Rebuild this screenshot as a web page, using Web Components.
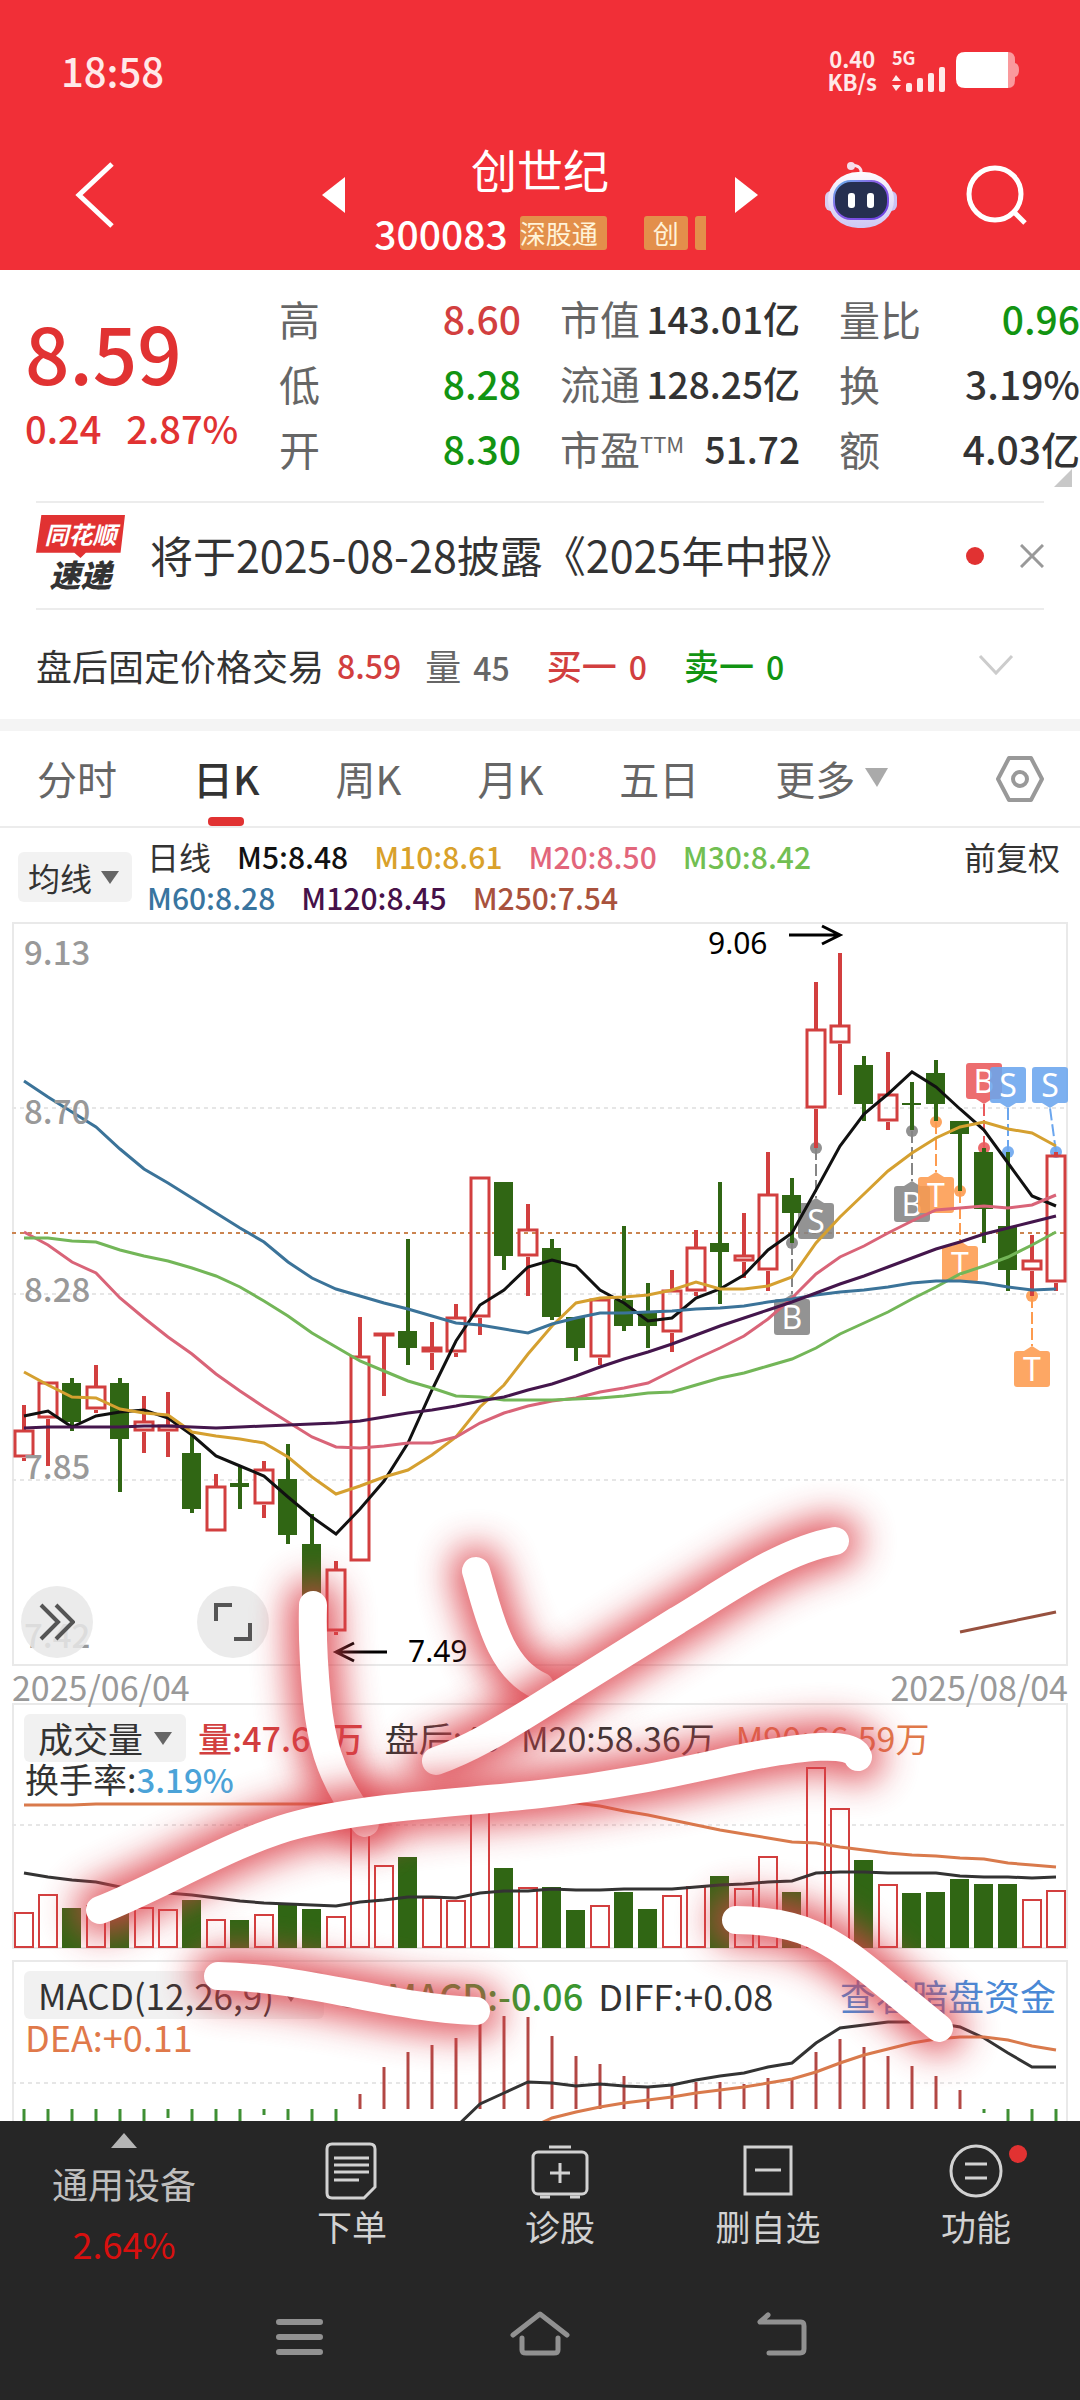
<!DOCTYPE html>
<html lang="zh-CN">
<head>
<meta charset="utf-8">
<meta name="viewport" content="width=device-width, initial-scale=1">
<title>创世纪 300083</title>
<style>
  * { box-sizing: border-box; }
  html { background: #262626; }
  body {
    margin: 0;
    min-height: 100vh;
    display: flex;
    flex-direction: column;
    font-family: "Noto Sans CJK SC", "Noto Sans", sans-serif;
    color: #333;
    --red: #e13232;
    --green: #129412;
    --rise: #d23f3f;
    --fall: #306614;
    --muted: #666;
    --line: #ececec;
  }
</style>
</head>
<body>
<status-bar></status-bar>
<stock-header name="创世纪" code="300083"></stock-header>
<quote-board></quote-board>
<news-strip>将于2025-08-28披露《2025年中报》</news-strip>
<after-hours></after-hours>
<period-tabs></period-tabs>
<ma-legend></ma-legend>
<chart-stack>
  <candle-chart></candle-chart>
  <volume-chart></volume-chart>
  <macd-chart></macd-chart>
</chart-stack>
<action-bar>
  <index-ticker slot="index" name="通用设备" change="2.64%"></index-ticker>
  <action-item label="下单">
    <svg width="60" height="60" viewBox="0 0 60 60" fill="none" stroke="#d2d2d2" stroke-width="3"><path d="M10 3h38q5 0 5 5v38l-11 11H10q-5 0-5-5V8q0-5 5-5z"/><path d="M12 17h35M12 24h35M12 31h35M12 39h25"/></svg>
  </action-item>
  <action-item label="诊股">
    <svg width="60" height="60" viewBox="0 0 60 60" fill="none" stroke="#d2d2d2" stroke-width="3"><rect x="3" y="11" width="54" height="42" rx="5"/><path d="M19 6h22M30 22v20M20 32h20M10 56h10M40 56h10"/></svg>
  </action-item>
  <action-item label="删自选">
    <svg width="60" height="60" viewBox="0 0 60 60" fill="none" stroke="#d2d2d2" stroke-width="3"><path d="M7 6h46v47H7zM17 29h26"/></svg>
  </action-item>
  <action-item label="功能" dot>
    <svg width="60" height="60" viewBox="0 0 60 60" fill="none" stroke="#d2d2d2" stroke-width="3"><circle cx="30" cy="30" r="25"/><path d="M19 23h22M19 37h22"/></svg>
  </action-item>
</action-bar>
<system-nav></system-nav>

<script>
const BASE = `
  <style>
    *, *::before, *::after { box-sizing: border-box; }
    button { font: inherit; color: inherit; background: none; border: 0; padding: 0; margin: 0; cursor: pointer; }
    a { color: inherit; text-decoration: none; }
    svg { display: block; flex: none; }
  </style>`;

const define = (name, render) =>
  customElements.define(
    name,
    class extends HTMLElement {
      connectedCallback() {
        if (this.shadowRoot) return;
        this.attachShadow({ mode: "open" }).innerHTML = BASE + render(this);
      }
    }
  );

define("status-bar", () => /*html*/ `
  <style>
    :host { display: flex; align-items: center; justify-content: space-between; height: 130px; padding: 10px 60px 0 61px; background: #f12f37; color: #ffe9e9; }
    time { font-size: 40px; line-height: 40px; font-weight: 500; }
    .right { display: flex; align-items: center; gap: 10px; }
    .speed { font-size: 22px; line-height: 23px; font-weight: 700; text-align: center; }
    .cell { font-size: 18px; line-height: 18px; font-weight: 700; padding-left: 5px; }
  </style>
  <time>18:58</time>
  <div class="right">
    <div class="speed">0.40<br>KB/s</div>
    <div class="cell">5G
      <svg width="54" height="26" viewBox="0 0 54 26" fill="currentColor"><path d="M0 15l4-6 5 6zM0 19h9l-5 6z"/><rect x="14" y="17" width="6" height="9" rx="2"/><rect x="25" y="12" width="6" height="14" rx="2"/><rect x="36" y="7" width="6" height="19" rx="2"/><rect x="47" y="1" width="6" height="25" rx="2"/></svg>
    </div>
    <svg width="64" height="36" viewBox="0 0 64 36"><path d="M50 0h2q7 0 7 8v3q4 1 4 7t-4 7v3q0 8-7 8h-2z" fill="#fa999c"/><path d="M9 0h43v36H9q-9 0-9-9V9q0-9 9-9z" fill="#fff"/></svg>
  </div>
`);

define("stock-header", (el) => /*html*/ `
  <style>
    :host { display: grid; grid-template-columns: 1fr auto 1fr; align-items: center; height: 140px; padding-bottom: 10px; background: #f12f37; color: #fff; }
    .back { justify-self: start; margin-left: 75px; }
    .middle { display: flex; align-items: center; gap: 31px; }
    .title { width: 328px; display: flex; flex-direction: column; align-items: center; }
    h1 { margin: 0; font-size: 46px; line-height: 76px; font-weight: 400; }
    .sub { display: flex; align-items: center; gap: 12px; font-size: 39px; line-height: 54px; font-weight: 500; }
    .tags { display: flex; width: 186px; overflow: hidden; font-size: 26px; line-height: 34px; font-weight: 400; color: #fff3d8; white-space: nowrap; }
    .tags span { flex: none; background: #e38f4b; border-radius: 3px; padding: 0 9px; }
    .tags span:first-child { padding-left: 0; margin-right: 37px; }
    .tags span:last-child { margin-left: 7px; }
    .tools { justify-self: end; display: flex; align-items: center; gap: 66px; margin-right: 52px; }
  </style>
  <button class="back" aria-label="返回"><svg width="40" height="68" viewBox="0 0 40 68" fill="none" stroke="#fff" stroke-width="5"><path d="M37 3L4 34l33 31"/></svg></button>
  <div class="middle">
    <button aria-label="上一只"><svg width="23" height="36" viewBox="0 0 23 36" fill="#fff"><path d="M23 0v36L0 18z"/></svg></button>
    <div class="title">
      <h1>${el.getAttribute("name")}</h1>
      <div class="sub">${el.getAttribute("code")}<div class="tags"><span>深股通</span><span>创</span><span></span></div></div>
    </div>
    <button aria-label="下一只"><svg width="23" height="36" viewBox="0 0 23 36" fill="#fff"><path d="M0 0v36l23-18z"/></svg></button>
  </div>
  <div class="tools">
    <button aria-label="智能助手">
      <svg width="74" height="70" viewBox="0 0 74 70">
        <defs>
          <linearGradient id="h" x1="0" y1="0" x2="0" y2="1"><stop offset="0" stop-color="#fffafd"/><stop offset="1" stop-color="#cdc8f4"/></linearGradient>
          <linearGradient id="f" x1="0" y1="0" x2="1" y2="1"><stop offset="0" stop-color="#63b8ea"/><stop offset=".4" stop-color="#8a5fe6"/><stop offset="1" stop-color="#6a3fe0"/></linearGradient>
        </defs>
        <path d="M37 13q1-7-9-8" fill="none" stroke="#fbe3ee" stroke-width="3"/><circle cx="27" cy="6" r="4" fill="#f6dcea"/>
        <rect x="1" y="31" width="12" height="20" rx="6" fill="#d9cdf0"/><rect x="61" y="31" width="12" height="20" rx="6" fill="#c9c2f2"/>
        <rect x="4" y="12" width="66" height="56" rx="30" fill="url(#h)"/>
        <rect x="10" y="21" width="54" height="38" rx="17" fill="#262f50" stroke="url(#f)" stroke-width="2"/>
        <rect x="24" y="33" width="7" height="15" rx="3" fill="#fff"/><rect x="43" y="33" width="7" height="15" rx="3" fill="#fff"/>
      </svg>
    </button>
    <button aria-label="搜索"><svg width="64" height="64" viewBox="0 0 64 64" fill="none" stroke="#fff" stroke-width="5"><circle cx="31" cy="31" r="26"/><path d="M50 49l11 11"/></svg></button>
  </div>
`);

define("quote-board", () => /*html*/ `
  <style>
    :host { display: grid; grid-template-columns: 240px 242px 240px 1fr; column-gap: 39px; padding: 16px 0 20px; background: #fff; position: relative; }
    .price { padding-left: 25px; color: var(--red); font-weight: 500; white-space: nowrap; }
    .price strong { display: block; font-size: 78px; line-height: 96px; margin-top: 17px; font-weight: 500; }
    .price div { display: flex; gap: 25px; font-size: 38px; line-height: 50px; margin-top: 4px; }
    dl { margin: 0; font-size: 41px; line-height: 65px; }
    dl div { display: flex; justify-content: space-between; height: 65px; white-space: nowrap; }
    dt { color: var(--muted); }
    dd { margin: 0; font-size: 39px; font-weight: 500; color: #333; }
    .mid dt { font-size: 40px; }
    .mid dd { font-size: 37px; }
    sup { font-size: 22px; line-height: 22px; vertical-align: 12px; }
    .up { color: var(--rise); }
    .down { color: var(--green); }
    .corner { position: absolute; right: 8px; bottom: 14px; }
  </style>
  <div class="price"><strong>8.59</strong><div><span>0.24</span><span>2.87%</span></div></div>
  <dl>
    <div><dt>高</dt><dd class="up">8.60</dd></div>
    <div><dt>低</dt><dd class="down">8.28</dd></div>
    <div><dt>开</dt><dd class="down">8.30</dd></div>
  </dl>
  <dl class="mid">
    <div><dt>市值</dt><dd>143.01亿</dd></div>
    <div><dt>流通</dt><dd>128.25亿</dd></div>
    <div><dt>市盈<sup>TTM</sup></dt><dd>51.72</dd></div>
  </dl>
  <dl>
    <div><dt>量比</dt><dd class="down">0.96</dd></div>
    <div><dt>换</dt><dd>3.19%</dd></div>
    <div><dt>额</dt><dd>4.03亿</dd></div>
  </dl>
  <svg class="corner" width="18" height="18" viewBox="0 0 18 18" fill="#c8c8c8"><path d="M18 0v18H0z"/></svg>
`);

define("news-strip", () => /*html*/ `
  <style>
    :host { display: block; padding: 0 36px; background: #fff; }
    .row { display: flex; align-items: center; height: 109px; border-top: 2px solid var(--line); border-bottom: 2px solid var(--line); }
    .logo { width: 89px; margin-right: 25px; text-align: center; font-weight: 900; font-style: italic; line-height: 32px; }
    .logo b { display: block; height: 43px; background: var(--red); color: #fff; font-size: 24px; line-height: 37px; font-weight: 700; clip-path: polygon(6% 0, 100% 0, 95% 88%, 56% 88%, 50% 100%, 43% 88%, 0 88%); }
    .logo span { font-size: 31px; }
    a { flex: 1; font-size: 43px; line-height: 60px; padding-bottom: 4px; white-space: nowrap; color: #333; }
    .dot { width: 18px; height: 18px; border-radius: 50%; background: var(--red); margin-right: 36px; }
  </style>
  <div class="row">
    <div class="logo"><b>同花顺</b><span>速递</span></div>
    <a href="#"><slot></slot></a>
    <i class="dot"></i>
    <button aria-label="关闭"><svg width="24" height="24" viewBox="0 0 24 24" stroke="#999" stroke-width="3"><path d="M1 1l22 22M23 1L1 23"/></svg></button>
  </div>
`);

define("after-hours", () => /*html*/ `
  <style>
    :host { display: flex; align-items: center; height: 109px; padding: 0 66px 0 36px; background: #fff; font-size: 36px; white-space: nowrap; }
    b { font-size: 32px; font-weight: 500; }
    .p { margin-left: 13px; }
    .n { margin-left: 12px; }
    .g { margin-left: 24px; color: var(--muted); }
    .up { color: var(--rise); }
    .down { color: var(--green); }
    .s { margin-left: 37px; font-size: 35px; font-weight: 500; }
    button { margin-left: auto; }
  </style>
  <span>盘后固定价格交易</span><b class="p up">8.59</b>
  <span class="g">量<b class="n">45</b></span>
  <span class="s up">买一<b class="n">0</b></span>
  <span class="s down">卖一<b class="n">0</b></span>
  <button aria-label="展开"><svg width="36" height="22" viewBox="0 0 36 22" fill="none" stroke="#ccc" stroke-width="3"><path d="M2 2l16 17L34 2"/></svg></button>
`);

define("period-tabs", () => /*html*/ `
  <style>
    :host { display: flex; align-items: center; height: 109px; padding: 0 36px 0 37px; border-top: 12px solid #f4f4f4; border-bottom: 2px solid var(--line); background: #fff; font-size: 40px; color: var(--muted); }
    nav { display: flex; align-self: stretch; gap: 76px; flex: 1; }
    nav button { display: flex; align-items: center; gap: 10px; white-space: nowrap; padding-bottom: 2px; }
    nav .on { position: relative; color: #333; font-weight: 500; }
    nav .on::after { content: ""; position: absolute; left: 50%; bottom: 0; width: 36px; height: 9px; margin-left: -18px; border-radius: 4px; background: var(--red); }
  </style>
  <nav>
    <button>分时</button><button class="on">日K</button><button>周K</button><button>月K</button><button>五日</button>
    <button>更多<svg width="23" height="19" viewBox="0 0 23 19" fill="#aaa"><path d="M0 0h23L12 19z"/></svg></button>
  </nav>
  <button aria-label="设置"><svg width="48" height="46" viewBox="0 0 48 46" fill="none" stroke="#999" stroke-width="4"><path d="M13 2h22l11 21-11 21H13L2 23z" stroke-linejoin="round"/><circle cx="24" cy="23" r="7"/></svg></button>
`);

define("ma-legend", () => /*html*/ `
  <style>
    :host { display: flex; align-items: center; padding: 8px 20px 4px 18px; background: #fff; font-size: 32px; color: #333; }
    .pick { display: flex; align-items: center; gap: 9px; width: 114px; height: 50px; padding-left: 10px; border-radius: 6px; background: #f2f2f2; margin-right: 15px; white-space: nowrap; }
    .list { flex: 1; display: flex; flex-wrap: wrap; column-gap: 26px; padding-right: 60px; line-height: 41px; font-weight: 500; font-size: 30px; }
    .list span:first-child { font-size: 32px; font-weight: 400; }
    .adj { align-self: flex-start; line-height: 41px; }
  </style>
  <button class="pick">均线<svg width="18" height="13" viewBox="0 0 18 13" fill="#666"><path d="M0 0h18L9 13z"/></svg></button>
  <div class="list">
    <span>日线</span><span style="color:#111">M5:8.48</span><span style="color:#d9a12b">M10:8.61</span><span style="color:#e2667b">M20:8.50</span><span style="color:#72bf52">M30:8.42</span>
    <span style="color:#39759f">M60:8.28</span><span style="color:#461149">M120:8.45</span><span style="color:#a9523d">M250:7.54</span>
  </div>
  <button class="adj">前复权</button>
`);

/* ---------- charts: all three share one x axis, 44 days, 24 units apart ---------- */
const X0 = 24;
const STEP = 24;
const RISE = "#d23f3f";
const FALL = "#306614";
const cx = (i) => X0 + i * STEP;

// start: index of the first value
const line = (color, ys, start = 0) =>
  `<polyline fill="none" stroke="${color}" stroke-width="3" points="${ys.map((y, i) => `${cx(i + start)},${y}`).join(" ")}"/>`;

const dashes = (y, color = "#e6e6e6") =>
  `<path d="M12 ${y}H1067" stroke="${color}" stroke-width="2" stroke-dasharray="4 4"/>`;

/* [rise, high, top, bottom, low] */
const CANDLES = [
  [1,1405,1430,1458,1461],[1,1382,1382,1419,1466],[0,1378,1383,1422,1431],[1,1365,1386,1410,1413],[0,1378,1383,1439,1492],
  [1,1396,1421,1432,1453],[1,1392,1425,1432,1457],[0,1435,1453,1509,1513],[1,1474,1486,1532,1532],[0,1466,1483,1487,1509],
  [1,1461,1469,1505,1518],[0,1444,1479,1535,1544],[0,1514,1544,1615,1620],[1,1561,1569,1632,1635],[1,1317,1356,1562,1562],
  [1,1333,1333,1336,1396],[0,1239,1331,1348,1365],[1,1322,1347,1353,1370],[1,1304,1317,1353,1357],[1,1177,1177,1318,1335],
  [0,1182,1182,1256,1270],[1,1204,1229,1257,1296],[0,1239,1248,1317,1320],[0,1317,1317,1348,1361],[1,1299,1299,1358,1365],
  [0,1226,1300,1326,1331],[0,1283,1313,1326,1348],[1,1270,1290,1333,1352],[1,1230,1247,1292,1296],[0,1182,1243,1252,1304],
  [1,1213,1255,1262,1278],[1,1152,1194,1271,1291],[0,1178,1195,1213,1243],[1,982,1029,1109,1148],[1,953,1025,1044,1095],
  [0,1056,1065,1104,1121],[1,1052,1094,1122,1130],[0,1082,1103,1105,1130],[0,1060,1073,1104,1121],[0,1121,1121,1134,1191],
  [0,1148,1152,1209,1243],[0,1152,1226,1270,1291],[1,1235,1260,1271,1296],[1,1152,1155,1283,1291],
];

const candle = ([rise, high, top, bottom, low], i) => {
  const x = cx(i);
  if (!rise) {
    return `<path d="M${x} ${high}V${low}" stroke="${FALL}" stroke-width="4"/><rect x="${x - 10}" y="${top}" width="19" height="${bottom - top}" fill="${FALL}"/>`;
  }
  const h = Math.max(bottom - top - 3, 1);
  return `<path d="M${x} ${high}V${top}M${x} ${bottom}V${low}" stroke="${RISE}" stroke-width="4"/><rect x="${x - 9}" y="${top + 1}" width="18" height="${h}" fill="none" stroke="${RISE}" stroke-width="3"/>`;
};

const TINT = { gray: "#858585", orange: "#fd9b4f", red: "#ea5a5c", blue: "#6ba6ee" };

/* box: left and top of the tag; up: the tag stands above its day */
const tag = (letter, tint, dotX, dotY, left, top, up) => {
  const tip = left + 18;
  const edge = up ? top + 36 : top;
  const out = up ? edge + 5 : edge - 5;
  const c = TINT[tint];
  return `<circle cx="${dotX}" cy="${dotY}" r="6" fill="${c}" opacity=".9"/>
    <path d="M${dotX} ${dotY}L${tip} ${out}" stroke="${c}" stroke-width="2" stroke-dasharray="12 4"/>
    <g opacity=".88"><rect x="${left}" y="${top}" width="36" height="36" rx="3" fill="${c}"/><path d="M${tip - 8} ${edge}L${tip} ${out}L${tip + 8} ${edge}z" fill="${c}"/></g>
    <text x="${tip}" y="${top + 30}" fill="#fff" font-size="32" text-anchor="middle" font-family="Noto Sans">${letter}</text>`;
};

define("candle-chart", () => /*html*/ `
  <style>
    :host { display: block; position: relative; }
    svg.plot { width: 100%; height: auto; }
    .float { position: absolute; left: 21px; bottom: 45px; display: flex; gap: 104px; }
    .float button { width: 72px; height: 72px; border-radius: 50%; background: rgba(232, 232, 232, .85); display: grid; place-items: center; }
    .dates { display: flex; justify-content: space-between; padding: 0 12px; font-size: 34px; line-height: 42px; height: 37px; color: #999; }
  </style>
  <svg class="plot" viewBox="0 922 1080 744">
    <rect x="13" y="923" width="1054" height="742" fill="#fff" stroke="#e9e9e9" stroke-width="2"/>
    ${dashes(1108)}${dashes(1294)}${dashes(1480)}${dashes(1233, "#cb8450")}
    ${tag("S", "gray", 816, 1148, 798, 1203)}
    ${tag("B", "gray", 792, 1243, 774, 1299)}
    ${tag("B", "gray", 912, 1131, 894, 1186)}
    ${tag("T", "orange", 936, 1122, 918, 1177)}
    ${tag("T", "orange", 960, 1191, 942, 1246)}
    ${tag("T", "orange", 1032, 1296, 1014, 1351)}
    ${tag("B", "red", 984, 1148, 966, 1063, true)}
    ${tag("S", "blue", 1008, 1152, 990, 1067, true)}
    ${tag("S", "blue", 1056, 1152, 1032, 1067, true)}
    ${CANDLES.map(candle).join("")}
    ${line("#111", [1416,1411,1427,1416,1412,1410,1418,1435,1456,1466,1476,1497,1517,1534,1509,1481,1443,1390,1341,1305,1290,1267,1260,1266,1290,1303,1321,1318,1298,1289,1275,1250,1233,1190,1146,1114,1094,1072,1087,1109,1130,1163,1196,1206])}
    ${line("#d5a030", [1372,1385,1397,1398,1409,1413,1415,1432,1436,1439,1443,1457,1477,1494,1486,1477,1470,1455,1437,1407,1385,1354,1326,1303,1298,1297,1295,1290,1282,1289,1289,1286,1277,1243,1217,1194,1171,1153,1138,1127,1122,1129,1133,1146])}
    ${line("#d96478", [1232,1245,1262,1273,1298,1318,1337,1354,1374,1391,1407,1422,1437,1447,1448,1446,1443,1443,1437,1423,1413,1406,1401,1398,1392,1388,1383,1371,1359,1348,1336,1319,1298,1274,1257,1246,1233,1221,1210,1208,1206,1208,1205,1195])}
    ${line("#73b658", [1238,1238,1241,1242,1250,1256,1261,1268,1276,1287,1301,1316,1333,1347,1361,1371,1381,1388,1396,1397,1400,1400,1400,1399,1398,1396,1393,1392,1385,1378,1373,1366,1359,1348,1334,1323,1312,1299,1287,1274,1266,1257,1245,1232])}
    ${line("#3b7399", [1081,1097,1112,1127,1149,1169,1183,1198,1213,1228,1242,1262,1278,1289,1296,1303,1309,1316,1323,1325,1329,1333,1324,1318,1313,1313,1312,1311,1309,1308,1306,1302,1299,1295,1292,1290,1287,1283,1281,1281,1283,1287,1290,1289])}
    ${line("#44164c", [1428,1427,1427,1427,1427,1426,1426,1427,1428,1427,1426,1425,1424,1423,1421,1417,1413,1410,1406,1401,1397,1390,1384,1376,1367,1359,1352,1344,1335,1326,1318,1310,1302,1293,1284,1276,1267,1258,1249,1242,1234,1228,1222,1216])}
    ${line("#97513f", [1632,1627,1622,1617,1612], 39)}
    <g fill="#999" font-size="33" font-weight="500">
      <text x="24" y="965">9.13</text><text x="24" y="1124">8.70</text><text x="24" y="1302">8.28</text><text x="24" y="1479">7.85</text><text x="24" y="1648">7.42</text>
    </g>
    <g fill="#000" font-size="30" font-family="Noto Sans"><text x="708" y="954">9.06</text><text x="408" y="1662">7.49</text></g>
    <g fill="none" stroke="#000" stroke-width="3"><path d="M789 935h51M822 926l18 9-18 9M387 1652h-50M354 1643l-18 9 18 9"/></g>
  </svg>
  <div class="float">
    <button aria-label="快进"><svg width="36" height="38" viewBox="0 0 36 38" fill="none" stroke="#555" stroke-width="4"><path d="M2 2l17 17L2 36M17 2l17 17-17 17"/></svg></button>
    <button aria-label="全屏"><svg width="38" height="38" viewBox="0 0 38 38" fill="none" stroke="#555" stroke-width="4"><path d="M2 18V2h16M20 36h16V20"/></svg></button>
  </div>
  <div class="dates"><span>2025/06/04</span><span>2025/08/04</span></div>
`);

const PANEL = /*html*/ `
  <style>
    :host { display: grid; }
    .plot, .legend { grid-area: 1 / 1; }
    .plot { width: 100%; height: auto; }
    .legend { font-size: 34px; line-height: 34px; padding: 11px 24px 0; align-self: start; white-space: nowrap; }
    .top { display: flex; align-items: center; font-weight: 500; }
    .pick { display: flex; align-items: center; gap: 11px; height: 48px; padding: 0 14px; border-radius: 6px; background: #f1f1f1; font-size: 35px; font-weight: 400; }
    .sub { padding-left: 1px; }
  </style>`;
const CARET = `<svg width="18" height="13" viewBox="0 0 18 13" fill="#666"><path d="M0 0h18L9 13z"/></svg>`;

const VOLUME = [1912,1894,1908,1905,1905,1907,1909,1900,1919,1920,1914,1905,1909,1916,1819,1865,1857,1897,1900,1800,1868,1887,1887,1910,1905,1892,1909,1895,1886,1876,1888,1856,1892,1767,1808,1860,1884,1893,1892,1879,1884,1884,1899,1890];

define("volume-chart", () => PANEL + /*html*/ `
  <style>
    .top { gap: 21px; }
    .pick { margin-right: -9px; }
    .sub { font-weight: 400; }
    .sub b { font-weight: 500; color: #4ba3d8; font-size: 33px; }
  </style>
  <svg class="plot" viewBox="0 1703 1080 257">
    <rect x="13" y="1704" width="1054" height="244" fill="#fff" stroke="#e9e9e9" stroke-width="2"/>
    ${dashes(1825)}
    ${VOLUME.map((y, i) =>
      CANDLES[i][0]
        ? `<rect x="${cx(i) - 9}" y="${y + 1}" width="18" height="${1947 - y - 1}" fill="#fff" stroke="${RISE}" stroke-width="2"/>`
        : `<rect x="${cx(i) - 10}" y="${y}" width="19" height="${1948 - y}" fill="${FALL}"/>`
    ).join("")}
    ${line("#d97a4c", [1805,1805,1805,1804,1804,1804,1804,1804,1804,1804,1804,1804,1804,1804,1804,1804,1804,1804,1804,1803,1803,1803,1803,1803,1806,1811,1815,1820,1825,1830,1834,1838,1842,1843,1847,1850,1853,1855,1856,1858,1859,1863,1865,1867])}
    ${line("#333", [1873,1877,1880,1882,1887,1891,1893,1895,1898,1901,1903,1904,1905,1906,1902,1900,1897,1897,1898,1893,1891,1891,1889,1890,1890,1889,1889,1889,1887,1885,1884,1882,1881,1873,1872,1872,1873,1873,1873,1876,1877,1877,1878,1877])}
  </svg>
  <div class="legend">
    <div class="top">
      <button class="pick">成交量${CARET}</button>
      <span style="color:#d23f3f">量:47.63万</span><span style="font-weight:400">盘后:45</span><span style="font-weight:400">M20:58.36万</span><span style="color:#e0794a;font-weight:400">M90:66.59万</span>
    </div>
    <div class="sub">换手率:<b>3.19%</b></div>
  </div>
`);

const MACD = [2121,2121,2121,2121,2121,2121,2118,2121,2121,2121,2115,2120,2121,2121,2094,2067,2052,2045,2038,2022,2016,2017,2036,2056,2064,2076,2086,2086,2082,2082,2084,2078,2079,2052,2039,2047,2056,2066,2076,2090,2113,2121,2121,2121];

define("macd-chart", () => PANEL + /*html*/ `
  <style>
    .pick { width: 300px; margin-right: 11px; }
    .info { margin-right: 24px; }
    .legend { font-size: 36px; }
    .pick { gap: 8px; }
    .d { margin-left: 15px; font-weight: 400; }
    .sub { color: #e0794a; }
    a { margin-left: auto; font-weight: 400; color: #4a89d6; }
  </style>
  <svg class="plot" viewBox="0 1960 1080 161">
    <path d="M13 2121V1961H1067V2121" fill="#fff" stroke="#e9e9e9" stroke-width="2"/>
    ${dashes(2083)}
    ${MACD.map((y, i) => `<path d="M${cx(i)} 2109V${y}" stroke="${y > 2109 ? "#3f8f34" : "#b24744"}" stroke-width="3"/>`).join("")}
    ${line("#333", [2127,2104,2093,2082,2083,2086,2084,2086,2087,2085,2080,2076,2073,2067,2063,2043,2028,2025,2022,2022,2023,2027,2038,2053,2067,2067], 18)}
    ${line("#d97a4c", [2129,2118,2112,2107,2103,2100,2097,2093,2090,2087,2083,2079,2072,2063,2055,2049,2043,2039,2037,2037,2040,2046,2050], 21)}
  </svg>
  <div class="legend">
    <div class="top">
      <button class="pick">MACD(12,26,9)${CARET}</button>
      <svg class="info" width="28" height="28" viewBox="0 0 28 28" fill="none" stroke="#999" stroke-width="2"><circle cx="14" cy="14" r="12"/><path d="M14 12v9M14 7v3"/></svg>
      <span style="color:#3b962f">MACD:-0.06</span><span class="d">DIFF:+0.08</span>
      <a href="#">查看暗盘资金</a>
    </div>
    <div class="sub">DEA:+0.11</div>
  </div>
`);

/* hand-drawn strokes lie over all three charts */
const INK = [
  "M313 1605C312 1640 314 1670 317 1700S326 1775 365 1823",
  "M476 1571C488 1610 498 1668 540 1686",
  "M436 1761C468 1750 500 1731 540 1706L678 1620C722 1594 780 1551 835 1541",
  "M100 1910C160 1887 235 1840 300 1824C370 1806 460 1803 540 1794C630 1784 690 1769 747 1757C800 1747 852 1740 858 1757",
  "M736 1920C800 1921 828 1936 884 1983L939 2028",
  "M218 1976C310 1978 390 2008 476 2011",
];

define("chart-stack", () => /*html*/ `
  <style>
    :host { display: block; position: relative; overflow: hidden; background: #fff; }
    svg { position: absolute; inset: 0; width: 100%; height: 100%; pointer-events: none; }
  </style>
  <slot></slot>
  <svg viewBox="0 922 1080 1199" preserveAspectRatio="xMidYMin meet" fill="none" stroke-linecap="round" stroke-linejoin="round">
    <defs><filter id="glow" filterUnits="userSpaceOnUse" x="0" y="1400" width="1080" height="800" color-interpolation-filters="sRGB"><feGaussianBlur stdDeviation="18"/></filter></defs>
    ${INK.map((d) => `<path d="${d}" stroke="#dc414a" stroke-width="50" opacity=".9" filter="url(#glow)"/><path d="${d}" stroke="#fff" stroke-width="28"/>`).join("")}
  </svg>
`);

define("index-ticker", (el) => /*html*/ `
  <style>
    :host { display: block; }
    button { width: 100%; display: flex; flex-direction: column; align-items: center; font-size: 36px; line-height: 60px; padding-top: 12px; color: #bfbfbf; }
    svg { margin-bottom: 5px; }
    em { font-style: normal; color: #d8100f; }
  </style>
  <button><svg width="26" height="15" viewBox="0 0 26 15" fill="#b5b5b5"><path d="M13 0l13 15H0z"/></svg>${el.getAttribute("name")}<em>${el.getAttribute("change")}</em></button>
`);

define("action-item", (el) => /*html*/ `
  <style>
    :host { display: block; }
    button { width: 100%; display: flex; flex-direction: column; align-items: center; font-size: 35px; line-height: 50px; padding-top: 20px; color: #d2d2d2; }
    .icon { position: relative; height: 60px; }
    i { position: absolute; right: -21px; top: 4px; width: 18px; height: 18px; border-radius: 50%; background: #e13232; }
  </style>
  <button><span class="icon"><slot></slot>${el.hasAttribute("dot") ? "<i></i>" : ""}</span>${el.getAttribute("label")}</button>
`);

define("action-bar", () => /*html*/ `
  <style>
    :host { display: grid; grid-template-columns: 248fr repeat(4, 208fr); height: 165px; background: #262626; }
  </style>
  <slot name="index"></slot><slot></slot>
`);

define("system-nav", () => /*html*/ `
  <style>
    :host { display: flex; flex: 1; justify-content: center; align-items: flex-start; gap: 181px; padding-top: 20px; background: #262626; min-height: 113px; }
  </style>
  <button aria-label="最近任务"><svg width="60" height="60" viewBox="0 0 60 60" stroke="#919191" stroke-width="6" stroke-linecap="round"><path d="M10 16h41M10 31h41M10 46h41"/></svg></button>
  <button aria-label="主页"><svg width="60" height="60" viewBox="0 0 60 60" fill="none" stroke="#919191" stroke-width="5" stroke-linecap="round" stroke-linejoin="round"><path d="M3 29L30 8l27 21M12 32v12q0 3 4 3h28q4 0 4-3V32"/></svg></button>
  <button aria-label="返回"><svg width="60" height="60" viewBox="0 0 60 60" fill="none" stroke="#919191" stroke-width="5" stroke-linecap="round" stroke-linejoin="round"><path d="M17 9l-8 7h41q3 0 3 4v23q0 4-4 4H18"/></svg></button>
`);
</script>
</body>
</html>
